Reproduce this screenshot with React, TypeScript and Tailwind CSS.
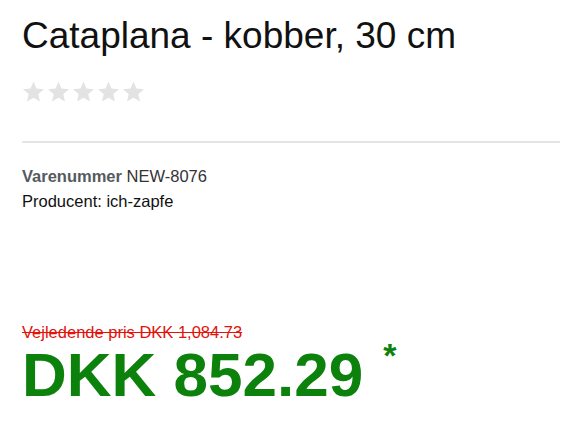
import React from "react";

const Star = () => (
  <svg width="23" height="22" viewBox="0 0 24 23" fill="#e3e3e3">
    <path d="M12 0.5l3.1 7.3 7.9 0.7-6 5.2 1.8 7.8L12 17.4l-6.8 4.1 1.8-7.8-6-5.2 7.9-0.7z" />
  </svg>
);

export default function App() {
  return (
    <div className="w-[575px] h-[421px] bg-white pl-[22px] pr-[15px] pt-[12px] overflow-hidden" style={{ fontFamily: '"Liberation Sans", Arial, sans-serif' }}>
      <h1 className="text-[37px] leading-[48px] text-[#111]">Cataplana - kobber, 30 cm</h1>
      <div className="flex gap-[2px] mt-[21px]">
        <Star />
        <Star />
        <Star />
        <Star />
        <Star />
      </div>
      <div className="h-[2px] bg-[#e2e4e5] mt-[38px]" />
      <div className="mt-[21px] text-[16.5px] leading-[25px] text-[#111]">
        <div>
          <span className="font-bold text-[#555a60]">Varenummer</span> <span className="text-[#333]">NEW-8076</span>
        </div>
        <div>Producent: ich-zapfe</div>
      </div>
      <div className="mt-[109px] text-[16.5px] leading-[19px] text-[#e3120b] line-through">Vejledende pris DKK 1,084.73</div>
      <div className="flex items-start text-[#0c820c] font-bold">
        <span className="text-[62px] leading-[66px]">DKK 852.29</span>
        <span className="text-[34px] leading-[34px] ml-[20px] -mt-[4px]">*</span>
      </div>
    </div>
  );
}
